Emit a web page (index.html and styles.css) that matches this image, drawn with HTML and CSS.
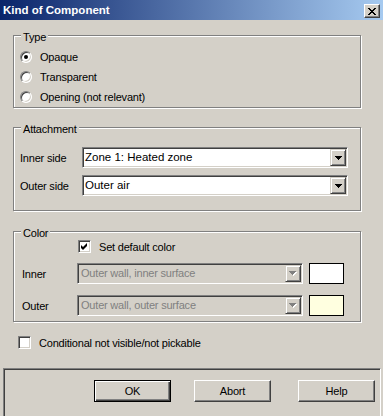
FILE: index.html
```html
<!DOCTYPE html>
<html lang="en">

<head>
    <meta charset="UTF-8">
    <title>Kind of Component</title>
    <link rel="stylesheet" href="styles.css">
</head>

<body>
    <div class="window">
        <div class="titlebar">
            <span class="title">Kind of Component</span>
            <span class="close-btn">
                <svg width="8" height="7" viewBox="0 0 8 7"><path d="M0 0h2v1h-2z M6 0h2v1h-2z M1 1h2v1h-2z M5 1h2v1h-2z M2 2h4v1h-4z M3 3h2v1h-2z M2 4h4v1h-4z M1 5h2v1h-2z M5 5h2v1h-2z M0 6h2v1h-2z M6 6h2v1h-2z" fill="#000"/></svg>
            </span>
        </div>

        <!-- Type -->
        <div class="group group-type">
            <div class="group-title">Type</div>
            <div class="radio-row"><span class="radio checked"></span>Opaque</div>
            <div class="radio-row"><span class="radio"></span>Transparent</div>
            <div class="radio-row"><span class="radio"></span>Opening (not relevant)</div>
        </div>

        <!-- Attachment -->
        <div class="group group-attach">
            <div class="group-title">Attachment</div>
            <div class="field-row">
                <span class="field-label">Inner side</span>
                <div class="combo">
                    <span class="combo-text">Zone 1: Heated zone</span>
                    <span class="combo-btn">
                        <svg width="7" height="4" viewBox="0 0 7 4"><path d="M0 0h7v1h-1v1h-1v1h-1v1h-1v-1h-1v-1h-1v-1h-1z" fill="#000"/></svg>
                    </span>
                </div>
            </div>
            <div class="field-row">
                <span class="field-label">Outer side</span>
                <div class="combo">
                    <span class="combo-text">Outer air</span>
                    <span class="combo-btn">
                        <svg width="7" height="4" viewBox="0 0 7 4"><path d="M0 0h7v1h-1v1h-1v1h-1v1h-1v-1h-1v-1h-1v-1h-1z" fill="#000"/></svg>
                    </span>
                </div>
            </div>
        </div>

        <!-- Color -->
        <div class="group group-color">
            <div class="group-title">Color</div>
            <div class="check-row default-color">
                <span class="checkbox">
                    <svg width="7" height="7" viewBox="0 0 7 7"><path d="M0 2 L2 4 L6 0 L6 3 L2 7 L0 5 Z" fill="#000"/></svg>
                </span>
                Set default color
            </div>
            <div class="color-row">
                <span class="color-label">Inner</span>
                <div class="combo disabled">
                    <span class="combo-text">Outer wall, inner surface</span>
                    <span class="combo-btn">
                        <svg width="8" height="5" viewBox="0 0 8 5"><path d="M1 1h7v1h-1v1h-1v1h-1v1h-1v-1h-1v-1h-1v-1h-1z" fill="#fff"/><path d="M0 0h7v1h-1v1h-1v1h-1v1h-1v-1h-1v-1h-1v-1h-1z" fill="#808080"/></svg>
                    </span>
                </div>
                <span class="swatch"></span>
            </div>
            <div class="color-row">
                <span class="color-label">Outer</span>
                <div class="combo disabled">
                    <span class="combo-text">Outer wall, outer surface</span>
                    <span class="combo-btn">
                        <svg width="8" height="5" viewBox="0 0 8 5"><path d="M1 1h7v1h-1v1h-1v1h-1v1h-1v-1h-1v-1h-1v-1h-1z" fill="#fff"/><path d="M0 0h7v1h-1v1h-1v1h-1v1h-1v-1h-1v-1h-1v-1h-1z" fill="#808080"/></svg>
                    </span>
                </div>
                <span class="swatch cream"></span>
            </div>
        </div>

        <div class="check-row conditional">
            <span class="checkbox"></span>
            Conditional not visible/not pickable
        </div>

        <div class="button-panel">
            <button class="btn default">OK</button>
            <button class="btn">Abort</button>
            <button class="btn help">Help</button>
        </div>
    </div>
</body>

</html>
```

FILE: styles.css
```css
/* Win classic dialog */
body {
    margin: 0;
    background: #d4d0c8;
    font-family: 'Liberation Sans', Arial, sans-serif;
    font-size: 11px;
    letter-spacing: -0.2px;
    color: #000;
}

.window {
    width: 383px;
    height: 416px;
    overflow: hidden;
}

/* Title bar */
.titlebar {
    height: 20px;
    display: flex;
    align-items: center;
    justify-content: space-between;
    padding: 0 3px 0 3px;
    background: linear-gradient(to right, #0a246a, #a6caf0);
}

.title {
    color: #fff;
    font-weight: bold;
    font-size: 11.5px;
    letter-spacing: 0;
}

.close-btn {
    width: 16px;
    height: 14px;
    margin-top: 2px;
    box-sizing: border-box;
    display: flex;
    align-items: center;
    justify-content: center;
    background: #d4d0c8;
    border: 1px solid;
    border-color: #fff #404040 #404040 #fff;
    box-shadow: inset -1px -1px 0 #808080;
}

.close-btn svg {
    display: block;
}

/* Group boxes */
.group {
    margin-left: 13px;
    width: 348px;
    box-sizing: border-box;
    border: 1px solid #808080;
    box-shadow: 1px 1px 0 #fff, inset 1px 1px 0 #fff;
    padding: 0 0 0 6px;
}

/* title sits on the top border; its bottom margin sets the gap below */
.group-title {
    width: fit-content;
    background: #d4d0c8;
    line-height: 13px;
    padding: 0 2px;
    margin: -5px 0 -8px 1px;
}

.group-type {
    margin-top: 15px;
    padding-bottom: 2px;
}

.group-type .group-title {
    margin-bottom: 5px;
}

.group-attach {
    margin-top: 19px;
    padding-bottom: 14px;
}

.group-attach .group-title {
    margin-bottom: 11px;
}

.group-color {
    margin-top: 20px;
    padding-bottom: 5px;
}

.group-color .group-title {
    margin-bottom: 0;
}

/* Radios */
.radio-row {
    height: 16px;
    display: flex;
    align-items: center;
    margin-bottom: 4px;
}

.radio-row:last-child {
    margin-bottom: 0;
}

.radio {
    width: 12px;
    height: 12px;
    box-sizing: border-box;
    border-radius: 50%;
    border: 1px solid;
    border-color: #808080 #fff #fff #808080;
    background: #fff;
    box-shadow: inset 1px 1px 0 #404040, inset -1px -1px 0 #d4d0c8;
    margin-right: 8px;
    display: flex;
    align-items: center;
    justify-content: center;
}

.radio.checked::after {
    content: '';
    width: 4px;
    height: 4px;
    border-radius: 50%;
    background: #000;
}

/* Combos */
.field-row {
    display: flex;
    align-items: center;
    margin-bottom: 7px;
}

.field-row:last-child {
    margin-bottom: 0;
}

.field-label {
    width: 62px;
}

.combo {
    width: 266px;
    height: 21px;
    box-sizing: border-box;
    display: flex;
    padding: 1px;
    border: 1px solid;
    border-color: #808080 #fff #fff #808080;
    box-shadow: inset 1px 1px 0 #404040, inset -1px -1px 0 #d4d0c8;
    background: #fff;
}

.combo-text {
    flex: 1;
    line-height: 17px;
    padding-left: 1px;
    font-size: 11.5px;
    letter-spacing: 0;
    white-space: nowrap;
    overflow: hidden;
}

.combo-btn {
    width: 16px;
    height: 17px;
    box-sizing: border-box;
    display: flex;
    align-items: center;
    justify-content: center;
    background: #d4d0c8;
    border: 1px solid;
    border-color: #d4d0c8 #404040 #404040 #d4d0c8;
    box-shadow: inset 1px 1px 0 #fff, inset -1px -1px 0 #808080;
}

.combo-btn svg {
    display: block;
}

.combo.disabled {
    width: 226px;
    background: #d4d0c8;
}

.combo.disabled .combo-text {
    color: #808080;
    font-size: 11px;
    letter-spacing: -0.2px;
    padding-left: 2px;
}

/* Checkboxes */
.check-row {
    display: flex;
    align-items: center;
    height: 13px;
}

.checkbox {
    width: 13px;
    height: 13px;
    box-sizing: border-box;
    border: 1px solid;
    border-color: #808080 #fff #fff #808080;
    box-shadow: inset 1px 1px 0 #404040, inset -1px -1px 0 #d4d0c8;
    background: #fff;
    margin-right: 8px;
    display: flex;
    align-items: center;
    justify-content: center;
}

.checkbox svg {
    display: block;
}

.default-color {
    margin-left: 58px;
}

.color-row {
    display: flex;
    align-items: center;
    height: 21px;
    margin-top: 10px;
}

.color-row + .color-row {
    margin-top: 11px;
}

.color-label {
    width: 55px;
    padding-left: 2px;
}

.swatch {
    width: 35px;
    height: 21px;
    box-sizing: border-box;
    border: 1px solid #000;
    background: #fff;
    margin-left: 6px;
}

.swatch.cream {
    background: #ffffe0;
}

.conditional {
    margin: 14px 0 0 18px;
}

/* Bottom buttons */
.button-panel {
    margin: 19px 0 0 3px;
    width: 378px;
    height: 60px;
    box-sizing: border-box;
    border: 1px solid;
    border-color: #808080 #fff #fff #808080;
    box-shadow: inset 1px 1px 0 #404040;
    display: flex;
    align-items: flex-start;
    gap: 23px;
    padding: 11px 0 0 90px;
}

.btn {
    width: 77px;
    height: 22px;
    box-sizing: border-box;
    background: #d4d0c8;
    border: 1px solid;
    border-color: #fff #404040 #404040 #fff;
    box-shadow: inset -1px -1px 0 #808080, inset 1px 1px 0 #d4d0c8;
    font-family: 'Liberation Sans', Arial, sans-serif;
    font-size: 11px;
    letter-spacing: -0.2px;
    color: #000;
    padding: 0;
}

.btn.default {
    border-color: #000;
    box-shadow: inset 1px 1px 0 #fff, inset -1px -1px 0 #404040, inset -2px -2px 0 #808080;
}

.btn.help {
    margin-left: 4px;
}
```
